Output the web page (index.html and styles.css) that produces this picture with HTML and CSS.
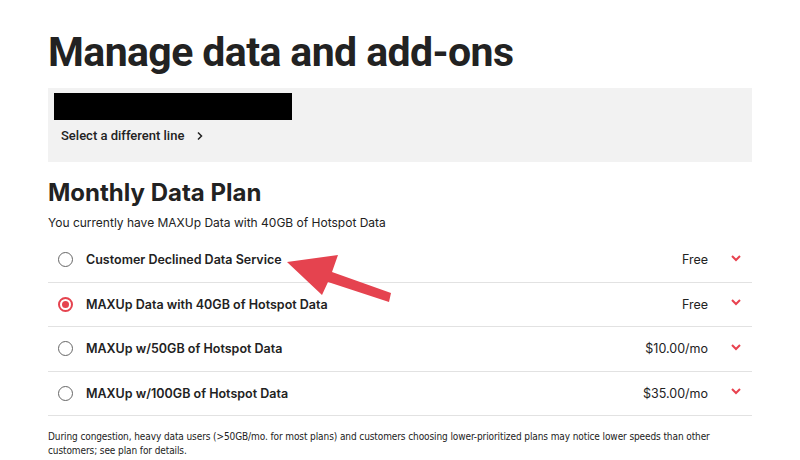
FILE: index.html
```html
<!DOCTYPE html>
<html lang="en">
<head>
    <meta charset="UTF-8">
    <title>Manage data and add-ons</title>
    <link rel="stylesheet" href="styles.css">
</head>
<body>
    <div class="page">
        <h1>Manage data and add-ons</h1>

        <div class="line-box">
            <div class="redacted"></div>
            <a class="line-link" href="#">Select a different line
                <svg width="8" height="10" viewBox="0 0 8 10"><path d="M2 1.5 L5.5 5 L2 8.5" fill="none" stroke="#222" stroke-width="1.5"/></svg>
            </a>
        </div>

        <h2>Monthly Data Plan</h2>
        <p class="current">You currently have MAXUp Data with 40GB of Hotspot Data</p>

        <div class="plans">
            <div class="plan">
                <span class="radio"></span>
                <span class="plan-name">Customer Declined Data Service</span>
                <span class="plan-price">Free</span>
                <svg class="chev" width="12" height="8" viewBox="0 0 12 8"><path d="M2 2 L6 6 L10 2" fill="none" stroke="#e8424f" stroke-width="2"/></svg>
            </div>
            <div class="plan">
                <span class="radio checked"></span>
                <span class="plan-name">MAXUp Data with 40GB of Hotspot Data</span>
                <span class="plan-price">Free</span>
                <svg class="chev" width="12" height="8" viewBox="0 0 12 8"><path d="M2 2 L6 6 L10 2" fill="none" stroke="#e8424f" stroke-width="2"/></svg>
            </div>
            <div class="plan">
                <span class="radio"></span>
                <span class="plan-name">MAXUp w/50GB of Hotspot Data</span>
                <span class="plan-price">$10.00/mo</span>
                <svg class="chev" width="12" height="8" viewBox="0 0 12 8"><path d="M2 2 L6 6 L10 2" fill="none" stroke="#e8424f" stroke-width="2"/></svg>
            </div>
            <div class="plan">
                <span class="radio"></span>
                <span class="plan-name">MAXUp w/100GB of Hotspot Data</span>
                <span class="plan-price">$35.00/mo</span>
                <svg class="chev" width="12" height="8" viewBox="0 0 12 8"><path d="M2 2 L6 6 L10 2" fill="none" stroke="#e8424f" stroke-width="2"/></svg>
            </div>
        </div>

        <p class="note">During congestion, heavy data users (&gt;50GB/mo. for most plans) and customers choosing lower-prioritized plans may notice lower speeds than other customers; see plan for details.</p>
    </div>

    <!-- annotation arrow drawn over the screenshot -->
    <svg class="arrow" width="800" height="460" viewBox="0 0 800 460">
        <polygon points="287,262 338,255 332,272 391,293 389,302 328,282 322,295" fill="#e5434f"/>
    </svg>
</body>
</html>
```

FILE: styles.css
```css
* {
    margin: 0;
    padding: 0;
    box-sizing: border-box;
}

body {
    font-family: Inter, 'Noto Sans', sans-serif;
    background: #fff;
    color: #222;
    position: relative;
    width: 800px;
    height: 460px;
    overflow: hidden;
}

.page {
    width: 704px;
    margin-left: 48px;
    padding-top: 26px;
}

h1 {
    font-family: Roboto, 'Liberation Sans', sans-serif;
    font-size: 41px;
    font-weight: 700;
    letter-spacing: -0.6px;
    line-height: 52px;
    color: #222;
}

.line-box {
    margin-top: 10px;
    height: 74px;
    background: #f2f2f2;
    padding: 5px 6px;
}

.redacted {
    width: 238px;
    height: 27px;
    background: #000;
}

.line-link {
    display: inline-flex;
    align-items: center;
    gap: 12px;
    margin: 8px 0 0 7px;
    font-family: Roboto, 'Liberation Sans', sans-serif;
    font-size: 13px;
    font-weight: 500;
    color: #222;
    text-decoration: none;
}

h2 {
    margin-top: 16px;
    font-size: 24px;
    font-weight: 700;
    line-height: 30px;
    color: #222;
}

.current {
    margin-top: 6px;
    font-size: 12px;
    line-height: 18px;
    color: #222;
}

.plans {
    margin-top: 6px;
}

.plan {
    display: flex;
    align-items: center;
    height: 44.5px;
    border-bottom: 1.5px solid #e2e2e2;
    padding: 0 10px 0 10px;
}

.radio {
    width: 15px;
    height: 15px;
    border: 1.5px solid #666;
    border-radius: 50%;
    flex: none;
    display: flex;
    align-items: center;
    justify-content: center;
}

.radio.checked {
    border: 2px solid #e5434f;
}

.radio.checked::after {
    content: '';
    width: 7px;
    height: 7px;
    border-radius: 50%;
    background: #e5434f;
}

.plan-name {
    margin-left: 13px;
    font-size: 12.5px;
    font-weight: 600;
    flex: 1;
}

.plan-price {
    font-size: 12.5px;
}

.chev {
    margin-left: 22px;
    margin-top: -4px;
}

.note {
    margin-top: 14px;
    font-family: 'DejaVu Sans Condensed', 'DejaVu Sans', sans-serif;
    font-size: 10px;
    letter-spacing: -0.1px;
    line-height: 14px;
    color: #222;
}

.arrow {
    position: absolute;
    left: 0;
    top: 0;
    pointer-events: none;
}
```
